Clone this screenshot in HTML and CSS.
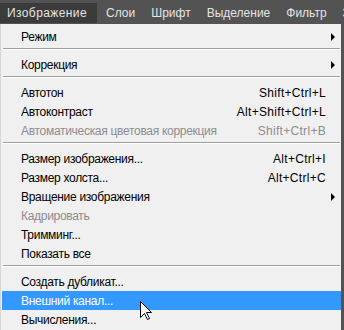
FILE: index.html
```html
<!DOCTYPE html>
<html lang="ru">

<head>
    <meta charset="UTF-8">
    <meta name="viewport" content="width=device-width, initial-scale=1.0">
    <title>Изображение</title>
    <link rel="stylesheet" href="styles.css">
</head>

<body>
    <div class="screen">
        <nav class="menubar">
            <span class="menubar-item active">Изображение</span>
            <span class="menubar-item">Слои</span>
            <span class="menubar-item">Шрифт</span>
            <span class="menubar-item">Выделение</span>
            <span class="menubar-item">Фильтр</span>
            <span class="menubar-item">3D</span>
        </nav>

        <ul class="menu">
            <li class="menu-row"><span>Режим</span><span></span><span class="arrow"></span></li>
            <li class="menu-sep"></li>
            <li class="menu-row"><span>Коррекция</span><span></span><span class="arrow"></span></li>
            <li class="menu-sep"></li>
            <li class="menu-row"><span>Автотон</span><span class="key">Shift+Ctrl+L</span></li>
            <li class="menu-row"><span>Автоконтраст</span><span class="key">Alt+Shift+Ctrl+L</span></li>
            <li class="menu-row disabled"><span>Автоматическая цветовая коррекция</span><span class="key">Shift+Ctrl+B</span></li>
            <li class="menu-sep"></li>
            <li class="menu-row"><span>Размер изображения...</span><span class="key">Alt+Ctrl+I</span></li>
            <li class="menu-row"><span>Размер холста...</span><span class="key">Alt+Ctrl+C</span></li>
            <li class="menu-row"><span>Вращение изображения</span><span></span><span class="arrow"></span></li>
            <li class="menu-row disabled"><span>Кадрировать</span></li>
            <li class="menu-row"><span>Тримминг...</span></li>
            <li class="menu-row"><span>Показать все</span></li>
            <li class="menu-sep"></li>
            <li class="menu-row"><span>Создать дубликат...</span></li>
            <li class="menu-row hover"><span>Внешний канал...</span></li>
            <li class="menu-row"><span>Вычисления...</span></li>
        </ul>

        <!-- курсор мыши поверх пункта меню -->
        <svg class="cursor" width="13" height="20" viewBox="0 0 13 20">
            <path d="M0.5 0.5 L0.5 16.5 L4.5 12.5 L7.5 18.5 L9.5 17.5 L6.5 11.5 L11.5 11.5 Z" fill="#fff" stroke="#000" stroke-width="1" stroke-linejoin="miter" />
        </svg>
    </div>
</body>

</html>
```

FILE: styles.css
```css
* {
    box-sizing: border-box;
}

body {
    margin: 0;
    background-color: #535353;
    font-family: "Liberation Sans", Arial, sans-serif;
    font-size: 12px;
}

.screen {
    position: relative;
    width: 344px;
    height: 330px;
    overflow: hidden;
}

.menubar {
    display: flex;
    gap: 9px;
    height: 24px;
    padding-top: 3px;
    white-space: nowrap;
    color: #e4e4e4;
}

.menubar-item {
    display: flex;
    align-items: center;
    height: 20px;
    padding: 0 7px;
    margin-right: -7px;
}

.menubar-item.active {
    background-color: #3b3b3b;
    padding-right: 10px;
    letter-spacing: 0.4px;
}

.menu {
    list-style: none;
    margin: 0;
    width: 341px;
    height: 306px;
    padding: 3px 0 0 0;
    background-color: #f0f0f0;
    border-left: 1px solid #d6d6d6;
}

.menu-row {
    display: grid;
    grid-template-columns: 1fr auto 15px;
    align-items: center;
    height: 19px;
    margin: 0 0 0 1px;
    padding-left: 19px;
    color: #000;
    white-space: nowrap;
    letter-spacing: -0.3px;
}

.menu-row .key {
    letter-spacing: 0.3px;
}

.menu-row.disabled {
    color: #8d8d8d;
}

.menu-row.hover {
    background-color: #3399ff;
    color: #fff;
}

.menu-sep {
    height: 9px;
    margin: 0 1px 0 2px;
    padding-top: 2px;
}

.menu-sep::before {
    content: "";
    display: block;
    border-top: 1px solid #a0a0a0;
    border-bottom: 1px solid #fff;
}

.arrow {
    justify-self: start;
    margin-left: 5px;
    width: 0;
    height: 0;
    border-top: 4px solid transparent;
    border-bottom: 4px solid transparent;
    border-left: 4px solid #000;
}

.cursor {
    position: absolute;
    left: 140px;
    top: 301px;
}
```
